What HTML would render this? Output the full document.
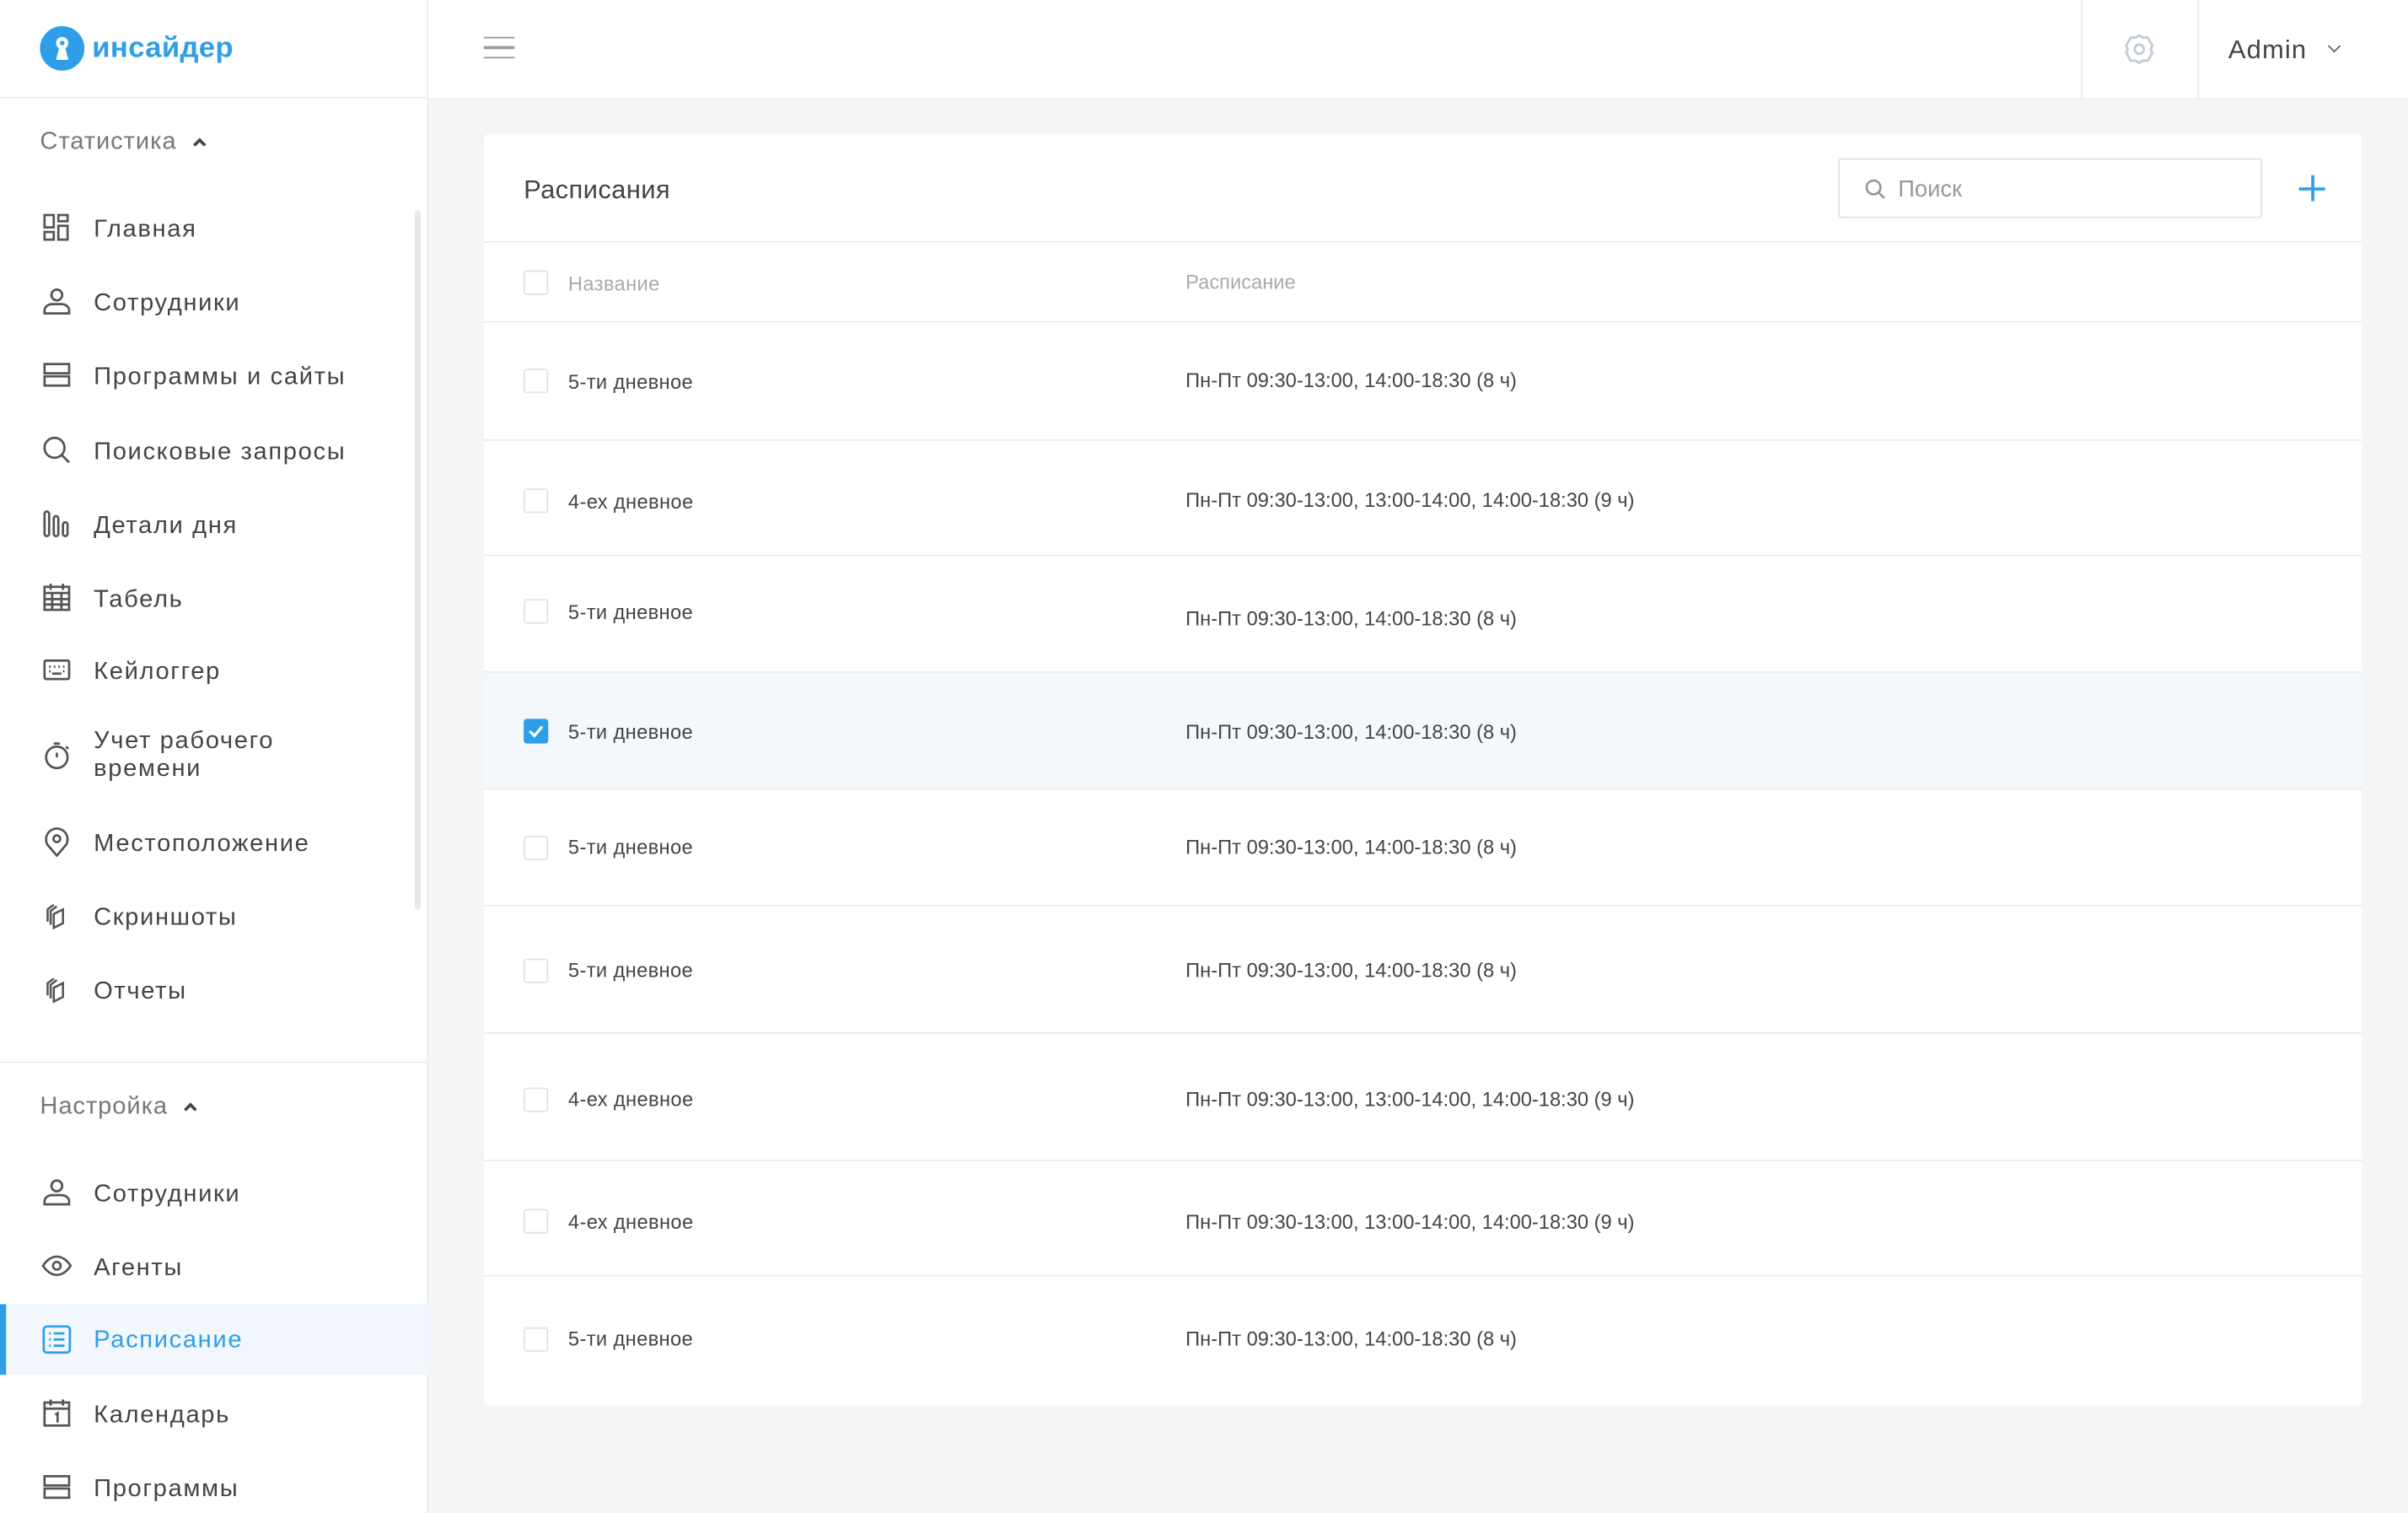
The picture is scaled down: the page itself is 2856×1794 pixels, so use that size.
<!DOCTYPE html>
<html><head><meta charset="utf-8"><style>
*{margin:0;padding:0;box-sizing:border-box}
html,body{width:2856px;height:1794px;overflow:hidden;background:#f4f5f7}
#w{position:absolute;left:0;top:0;width:1568px;height:985px;transform:scale(1.82143);transform-origin:0 0;font-family:"Liberation Sans","Noto Sans CJK SC",sans-serif;color:#444}
.sb{position:absolute;left:0;top:0;width:279px;height:985px;background:#fff;border-right:1px solid #ececec}
.logo{position:absolute;left:26px;top:17px;display:flex;align-items:center}
.logo span{color:#2e9ee8;font-weight:bold;font-size:19px;margin-left:5px;letter-spacing:0.2px}
.hl{position:absolute;left:0;width:279px;height:1px;background:#ececec}
.sec{position:absolute;left:26px;font-size:16px;color:#777;letter-spacing:0.5px}
.sec i{display:inline-block;width:6px;height:6px;border-left:2px solid #444;border-top:2px solid #444;transform:rotate(45deg);margin-left:12px;position:relative;top:0px}
.it{position:absolute;left:0;width:279px;display:flex;align-items:center;font-size:16px;color:#444}
.it svg{position:absolute;left:27px;width:20px;height:20px}
.it b{font-weight:normal;position:absolute;left:61px;line-height:18px;letter-spacing:0.9px;top:3px}
.act{background:#f1f7fd;border-left:4px solid #2e9ee8}
.act b{color:#2e9ee8;top:15px}
.scr{position:absolute;left:270px;top:137px;width:4px;height:455px;background:#e8e8e8;border-radius:2px}
.top{position:absolute;left:279px;top:0;width:1289px;height:65px;background:#fff;border-bottom:1px solid #ececec}
.card{position:absolute;left:315px;top:87px;width:1223px;height:828px;background:#fff;border-radius:4px}
.r{position:absolute;left:0;width:1223px;border-bottom:1px solid #ececec;font-size:13px;color:#444}
.r .cb{position:absolute;left:26px;width:16px;height:16px;border:1px solid #e2e2e2;border-radius:2px}
.r .n{position:absolute;left:55px;letter-spacing:0.2px}
.r .s{position:absolute;left:457px}
</style></head><body><div id="w">
<div class="sb">
<div class="logo"><svg width="29" height="29" viewBox="0 0 29 29"><circle cx="14.5" cy="14.5" r="14.5" fill="#2e9ee8"/><circle cx="14.5" cy="11" r="4" fill="#fff"/><path d="M12.5 14h4l2 8h-8z" fill="#fff"/><circle cx="14.5" cy="11" r="1.5" fill="#2e9ee8"/></svg><span>инсайдер</span></div>
<div class="hl" style="top:63px"></div>
<div class="sec" style="top:84px">Статистика<i></i></div>
<div class="scr"></div>
<div class="it" style="top:138px;height:20px"><svg viewBox="0 0 20 20" fill="none" stroke="#555" stroke-width="1.5"><rect x="2" y="2" width="6" height="8"/><rect x="11" y="2" width="6" height="4"/><rect x="2" y="13" width="6" height="5"/><rect x="11" y="9" width="6" height="9"/></svg><b>Главная</b></div>
<div class="it" style="top:186px;height:20px"><svg viewBox="0 0 20 20" fill="none" stroke="#555" stroke-width="1.5"><circle cx="10" cy="6" r="3.5"/><path d="M2 18v-2c0-2 2-4 5-4h6c3 0 5 2 5 4v2z"/></svg><b>Сотрудники</b></div>
<div class="it" style="top:234px;height:20px"><svg viewBox="0 0 20 20" fill="none" stroke="#555" stroke-width="1.5"><rect x="2" y="3" width="16" height="6"/><rect x="2" y="11" width="16" height="6"/></svg><b>Программы и сайты</b></div>
<div class="it" style="top:283px;height:20px"><svg viewBox="0 0 20 20" fill="none" stroke="#555" stroke-width="1.5"><circle cx="8.5" cy="8.5" r="6.5"/><path d="M13.5 13.5L18 18"/></svg><b>Поисковые запросы</b></div>
<div class="it" style="top:331px;height:20px"><svg viewBox="0 0 20 20" fill="none" stroke="#555" stroke-width="1.5"><rect x="2" y="2" width="3" height="16" rx="1.5"/><rect x="8" y="5" width="3" height="13" rx="1.5"/><rect x="14" y="9" width="3" height="9" rx="1.5"/></svg><b>Детали дня</b></div>
<div class="it" style="top:379px;height:20px"><svg viewBox="0 0 20 20" fill="none" stroke="#555" stroke-width="1.5"><rect x="2" y="3" width="16" height="15"/><path d="M2 7h16M6 1v4M14 1v4M2 11h16M2 14.5h16M7 7v11M13 7v11"/></svg><b>Табель</b></div>
<div class="it" style="top:426px;height:20px"><svg viewBox="0 0 20 20" fill="none" stroke="#555" stroke-width="1.5"><rect x="2" y="4" width="16" height="12" rx="1"/><path d="M5 8h1M8 8h1M11 8h1M14 8h1M5 11h1M14 11h1M7 12.5h6"/></svg><b>Кейлоггер</b></div>
<div class="it" style="top:482px;height:20px"><svg viewBox="0 0 20 20" fill="none" stroke="#555" stroke-width="1.5"><circle cx="10" cy="11" r="7"/><path d="M10 8v3M8 2h4M16 4l1.5 1.5"/></svg><b style="top:-8px">Учет рабочего<br>времени</b></div>
<div class="it" style="top:538px;height:20px"><svg viewBox="0 0 20 20" fill="none" stroke="#555" stroke-width="1.5"><path d="M10 19l-6-7a7 7 0 1 1 12 0z"/><circle cx="10" cy="8" r="2.2"/></svg><b>Местоположение</b></div>
<div class="it" style="top:586px;height:20px"><svg viewBox="0 0 20 20" fill="none" stroke="#555" stroke-width="1.4"><path d="M4 14V6l4-3M6 16V7l4-3M8 18V9l6-3v9z"/></svg><b>Скриншоты</b></div>
<div class="it" style="top:634px;height:20px"><svg viewBox="0 0 20 20" fill="none" stroke="#555" stroke-width="1.4"><path d="M4 14V6l4-3M6 16V7l4-3M8 18V9l6-3v9z"/></svg><b>Отчеты</b></div>
<div class="hl" style="top:691px"></div>
<div class="sec" style="top:712px">Настройка<i></i></div>
<div class="it" style="top:766px;height:20px"><svg viewBox="0 0 20 20" fill="none" stroke="#555" stroke-width="1.5"><circle cx="10" cy="6" r="3.5"/><path d="M2 18v-2c0-2 2-4 5-4h6c3 0 5 2 5 4v2z"/></svg><b>Сотрудники</b></div>
<div class="it" style="top:814px;height:20px"><svg viewBox="0 0 20 20" fill="none" stroke="#555" stroke-width="1.5"><path d="M1 10s3.5-6 9-6 9 6 9 6-3.5 6-9 6-9-6-9-6z"/><circle cx="10" cy="10" r="2.5"/></svg><b>Агенты</b></div>
<div class="it act" style="top:849px;height:46px"><svg viewBox="0 0 20 20" fill="none" stroke="#2e9ee8" stroke-width="1.5" style="left:23px"><rect x="1.5" y="1.5" width="17" height="17" rx="2"/><path d="M5 6h1M8 6h7M5 10h1M8 10h7M5 14h1M8 14h7"/></svg><b style="left:57px">Расписание</b></div>
<div class="it" style="top:910px;height:20px"><svg viewBox="0 0 20 20" fill="none" stroke="#555" stroke-width="1.5"><rect x="2" y="3" width="16" height="15"/><path d="M2 7h16M6 1v4M14 1v4M9 11l1.5-1v6"/></svg><b>Календарь</b></div>
<div class="it" style="top:958px;height:20px"><svg viewBox="0 0 20 20" fill="none" stroke="#555" stroke-width="1.5"><rect x="2" y="3" width="16" height="6"/><rect x="2" y="11" width="16" height="6"/></svg><b>Программы</b></div>
</div>
<div class="top">
<div style="position:absolute;left:36px;top:24px;width:20px;height:14px;border-top:1.5px solid #999;border-bottom:1.5px solid #999"><div style="margin-top:5px;height:1.5px;background:#999"></div></div>
<div style="position:absolute;left:1076px;top:0;width:1px;height:65px;background:#ececec"></div>
<div style="position:absolute;left:1152px;top:0;width:1px;height:65px;background:#ececec"></div>
<svg style="position:absolute;left:1103px;top:21px" width="22" height="22" viewBox="0 0 22 22" fill="none" stroke="#c5ccd8" stroke-width="1.6"><path d="M11 2l2.5 1.5 3 0 1.5 2.6 1.5 2.5-1 2.4 1 2.5-1.5 2.5-1.5 2.5-3 0L11 20l-2.5-1.5-3 0-1.5-2.5L2.5 13.5 3.5 11l-1-2.4L4 6.1 5.5 3.5l3 0z"/><circle cx="11" cy="11" r="3"/></svg>
<div style="position:absolute;left:1172px;top:23px;font-size:17px;color:#444;letter-spacing:0.6px">Admin</div>
<div style="position:absolute;left:1238px;top:27px;width:6px;height:6px;border-right:1.3px solid #666;border-bottom:1.3px solid #666;transform:rotate(45deg)"></div>
</div>
<div class="card">
<div style="position:absolute;left:26px;top:27px;font-size:17px;color:#444;letter-spacing:0.2px">Расписания</div>
<div style="position:absolute;left:882px;top:16px;width:276px;height:39px;border:1px solid #e3e3e3;border-radius:2px"><svg style="position:absolute;left:16px;top:12px" width="14" height="14" viewBox="0 0 14 14" fill="none" stroke="#999" stroke-width="1.5"><circle cx="6" cy="6" r="4.5"/><path d="M9.5 9.5L13 13"/></svg><span style="position:absolute;left:38px;top:11px;font-size:15px;color:#999">Поиск</span></div>
<div style="position:absolute;left:1182px;top:27px;width:17px;height:17px"><div style="position:absolute;left:7.5px;top:0;width:2px;height:17px;background:#2e9ee8"></div><div style="position:absolute;top:7.5px;left:0;height:2px;width:17px;background:#2e9ee8"></div></div>
<div class="r" style="top:70px;height:53px;border-top:1px solid #ececec"><div class="cb" style="top:18px"></div><div class="n" style="top:19px;color:#aaa">Название</div><div class="s" style="top:18px;color:#aaa">Расписание</div></div>
<div class="r" style="top:123px;height:77px"><div class="cb" style="top:30px"></div><div class="n" style="top:31px">5-ти дневное</div><div class="s" style="top:30px">Пн-Пт 09:30-13:00, 14:00-18:30 (8 ч)</div></div>
<div class="r" style="top:200px;height:75px"><div class="cb" style="top:31px"></div><div class="n" style="top:32px">4-ех дневное</div><div class="s" style="top:31px">Пн-Пт 09:30-13:00, 13:00-14:00, 14:00-18:30 (9 ч)</div></div>
<div class="r" style="top:275px;height:76px"><div class="cb" style="top:28px"></div><div class="n" style="top:29px">5-ти дневное</div><div class="s" style="top:33px">Пн-Пт 09:30-13:00, 14:00-18:30 (8 ч)</div></div>
<div class="r" style="top:351px;height:76px;background:#f3f8fd"><div class="cb" style="top:30px;background:#2e9ee8;border-color:#2e9ee8"><svg width="14" height="14" viewBox="0 0 14 14" fill="none" stroke="#fff" stroke-width="1.8" style="position:absolute;left:0;top:0"><path d="M3 7l3 3 5-6"/></svg></div><div class="n" style="top:31px">5-ти дневное</div><div class="s" style="top:31px">Пн-Пт 09:30-13:00, 14:00-18:30 (8 ч)</div></div>
<div class="r" style="top:427px;height:76px"><div class="cb" style="top:30px"></div><div class="n" style="top:30px">5-ти дневное</div><div class="s" style="top:30px">Пн-Пт 09:30-13:00, 14:00-18:30 (8 ч)</div></div>
<div class="r" style="top:503px;height:83px"><div class="cb" style="top:34px"></div><div class="n" style="top:34px">5-ти дневное</div><div class="s" style="top:34px">Пн-Пт 09:30-13:00, 14:00-18:30 (8 ч)</div></div>
<div class="r" style="top:586px;height:83px"><div class="cb" style="top:35px"></div><div class="n" style="top:35px">4-ех дневное</div><div class="s" style="top:35px">Пн-Пт 09:30-13:00, 13:00-14:00, 14:00-18:30 (9 ч)</div></div>
<div class="r" style="top:669px;height:75px"><div class="cb" style="top:31px"></div><div class="n" style="top:32px">4-ех дневное</div><div class="s" style="top:32px">Пн-Пт 09:30-13:00, 13:00-14:00, 14:00-18:30 (9 ч)</div></div>
<div class="r" style="top:744px;height:84px;border-bottom:none"><div class="cb" style="top:33px"></div><div class="n" style="top:33px">5-ти дневное</div><div class="s" style="top:33px">Пн-Пт 09:30-13:00, 14:00-18:30 (8 ч)</div></div>
</div>
</div></body></html>
